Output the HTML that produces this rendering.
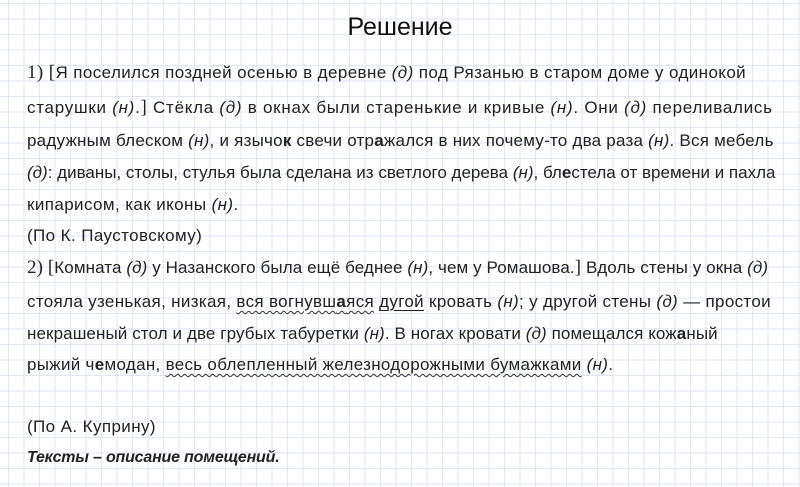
<!DOCTYPE html>
<html><head><meta charset="utf-8">
<style>
html,body{margin:0;padding:0}
body{width:800px;height:487px;overflow:hidden;position:relative;background-color:#fff;
background-image:linear-gradient(to right,#dfe7f3 1px,transparent 1px),linear-gradient(to bottom,#dfe7f3 1px,transparent 1px);
background-size:15.5px 15.5px;background-position:8px 3px;
font-family:"Liberation Sans","Noto Sans CJK SC",sans-serif;color:#222;}
.t{position:absolute;left:0;width:800px;text-align:center;top:13px;font-size:25px;color:#111}
.l{position:absolute;left:27px;font-size:17px;letter-spacing:0.4px;white-space:nowrap;line-height:20px}
i{font-style:italic}
.w{text-decoration:underline wavy #333;text-decoration-thickness:1px;text-underline-offset:3px}
.u{text-decoration:underline;text-underline-offset:3px}
b.h{font-weight:bold}
.n{font-family:"Liberation Serif",serif;font-size:19px}
</style></head><body>
<div class="t">Решение</div>
<div class="l" style="top:63px"><span class="n">1)</span> <span class="n">[</span>Я поселился поздней осенью в деревне <i>(д)</i> под Рязанью в старом доме у одинокой</div>
<div class="l" style="top:98px;letter-spacing:0.73px">старушки <i>(н)</i>.<span class="n">]</span> Стёкла <i>(д)</i> в окнах были старенькие и кривые <i>(н)</i>. Они <i>(д)</i> переливались</div>
<div class="l" style="top:131px;letter-spacing:0.23px">радужным блеском <i>(н)</i>, и язычо<b class="h">к</b> свечи отр<b class="h">а</b>жался в них почему-то два раза <i>(н)</i>. Вся мебель</div>
<div class="l" style="top:163px;letter-spacing:0px"><i>(д)</i>: диваны, столы, стулья была сделана из светлого дерева <i>(н)</i>, бл<b class="h">е</b>стела от времени и пахла</div>
<div class="l" style="top:195px">кипарисом, как иконы <i>(н)</i>.</div>
<div class="l" style="top:226px">(По К. Паустовскому)</div>
<div class="l" style="top:258px;letter-spacing:0.1px"><span class="n">2)</span> <span class="n">[</span>Комната <i>(д)</i> у Назанского была ещё беднее <i>(н)</i>, чем у Ромашова.<span class="n">]</span> Вдоль стены у окна <i>(д)</i></div>
<div class="l" style="top:292px;letter-spacing:0.33px">стояла узенькая, низкая, <span class="w">вся вогнувш<b class="h">а</b>яся</span> <span class="u">дугой</span> кровать <i>(н)</i>; у другой стены <i>(д)</i> — простои</div>
<div class="l" style="top:324px;letter-spacing:0.1px">некрашеный стол и две грубых табуретки <i>(н)</i>. В ногах кровати <i>(д)</i> помещался кож<b class="h">а</b>ный</div>
<div class="l" style="top:355px;letter-spacing:0.3px">рыжий ч<b class="h">е</b>модан, <span class="w">весь облепленный железнодорожными бумажками</span> <i>(н)</i>.</div>
<div class="l" style="top:417px">(По А. Куприну)</div>
<div class="l" style="top:448px;font-size:16px;letter-spacing:-0.2px"><b><i>Тексты – описание помещений.</i></b></div>
</body></html>
